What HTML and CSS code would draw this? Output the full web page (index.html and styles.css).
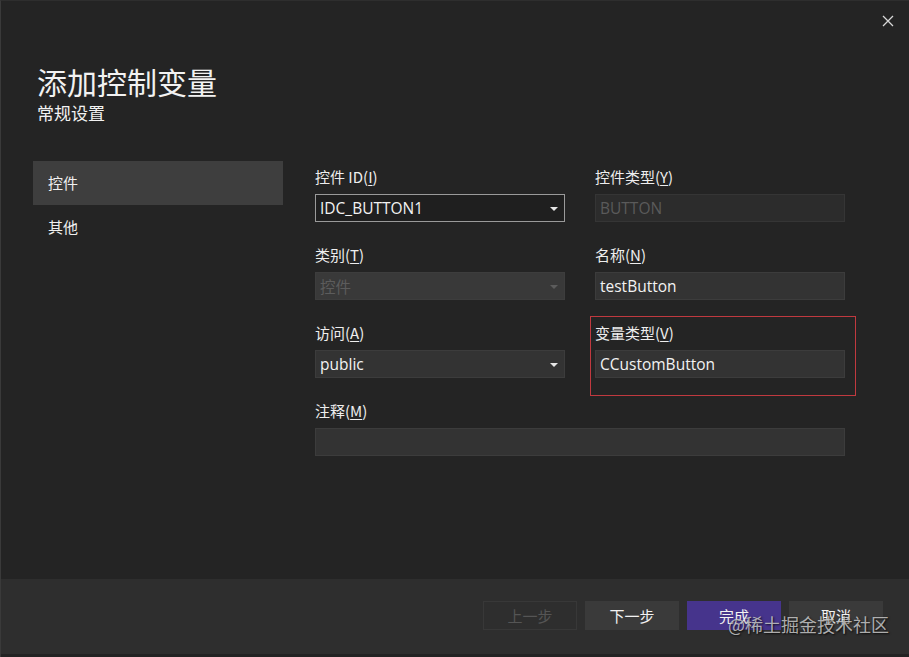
FILE: index.html
```html
<!DOCTYPE html>
<html lang="zh-CN">
<head>
<meta charset="utf-8">
<title>添加控制变量</title>
<link rel="stylesheet" href="styles.css">
</head>
<body>
<div class="window">
  <div class="close" aria-label="关闭">
    <svg width="12" height="12" viewBox="0 0 12 12"><path d="M1 1L11 11M11 1L1 11" stroke="#d8d8d8" stroke-width="1.3" fill="none"/></svg>
  </div>
  <div class="header">
    <h1 class="title">添加控制变量</h1>
    <div class="subtitle">常规设置</div>
  </div>
  <div class="main">
    <nav class="nav">
      <div class="nav-item active">控件</div>
      <div class="nav-item">其他</div>
    </nav>
    <div class="form">
      <div class="field">
        <label class="label">控件 ID(<u>I</u>)</label>
        <div class="input combo focus"><span>IDC_BUTTON1</span><i class="arrow"></i></div>
      </div>
      <div class="field">
        <label class="label">控件类型(<u>Y</u>)</label>
        <div class="input readonly"><span>BUTTON</span></div>
      </div>
      <div class="field">
        <label class="label">类别(<u>T</u>)</label>
        <div class="input combo disabled"><span>控件</span><i class="arrow dim"></i></div>
      </div>
      <div class="field">
        <label class="label">名称(<u>N</u>)</label>
        <div class="input"><span>testButton</span></div>
      </div>
      <div class="field">
        <label class="label">访问(<u>A</u>)</label>
        <div class="input combo"><span>public</span><i class="arrow"></i></div>
      </div>
      <div class="field highlight">
        <label class="label">变量类型(<u>V</u>)</label>
        <div class="input"><span>CCustomButton</span></div>
      </div>
      <div class="field wide">
        <label class="label">注释(<u>M</u>)</label>
        <div class="input"><span></span></div>
      </div>
    </div>
  </div>
  <div class="footer">
    <button class="btn disabled">上一步</button>
    <button class="btn">下一步</button>
    <button class="btn primary">完成</button>
    <button class="btn">取消</button>
    <div class="watermark">@稀土掘金技术社区</div>
  </div>
</div>
</body>
</html>
```
FILE: styles.css
```css
* { box-sizing: border-box; }
html, body {
  margin: 0;
  padding: 0;
  background: #252526;
}
body {
  width: 909px;
  height: 657px;
  overflow: hidden;
  font-family: "Noto Sans", "Noto Sans CJK SC", sans-serif;
  color: #f0f0f0;
}
.window {
  position: relative;
  width: 909px;
  height: 657px;
  background: #242424;
  border-left: 1px solid #3a3a3a;
  border-top: 1px solid #2e2e2e;
  display: flex;
  flex-direction: column;
}
.close {
  position: absolute;
  top: 14px;
  right: 15px;
  width: 12px;
  height: 12px;
  line-height: 0;
}
.header {
  padding: 62px 0 0 36px;
  height: 160px;
}
.title {
  margin: 0;
  font-family: "Noto Sans CJK SC", sans-serif;
  font-weight: 400;
  font-size: 30px;
  line-height: 36px;
  color: #f2f2f2;
}
.subtitle {
  font-family: "Noto Sans CJK SC", sans-serif;
  font-size: 17px;
  line-height: 22px;
  margin-top: 3px;
  color: #f2f2f2;
}
.main {
  flex: 1;
  display: flex;
  padding-left: 32px;
}
.nav {
  width: 250px;
  display: flex;
  flex-direction: column;
}
.nav-item {
  height: 44px;
  line-height: 44px;
  padding-left: 15px;
  font-family: "Noto Sans CJK SC", sans-serif;
  font-size: 15px;
  color: #f0f0f0;
}
.nav-item.active {
  background: #3e3e3e;
}
.form {
  margin-left: 32px;
  padding-top: 6px;
  display: grid;
  grid-template-columns: 250px 250px;
  column-gap: 30px;
  row-gap: 23px;
  align-content: start;
}
.field {
  display: flex;
  flex-direction: column;
  gap: 7px;
}
.field.wide {
  grid-column: 1 / span 2;
}
.field.highlight {
  outline: 1px solid #c0393f;
  margin: -6px -10px -17px -4px;
  padding: 6px 10px 17px 4px;
}
.label {
  font-family: "Noto Sans CJK SC", sans-serif;
  font-size: 15px;
  line-height: 20px;
  color: #eeeeee;
}
.label u {
  text-decoration-thickness: 1px;
  text-underline-offset: 2px;
}
.input {
  position: relative;
  height: 28px;
  background: #333333;
  border: 1px solid #3c3c3c;
  padding: 0 4px;
  display: flex;
  align-items: center;
  font-family: "Open Sans", "Noto Sans CJK SC", sans-serif;
  font-size: 15.5px;
  color: #f2f2f2;
}
.input.focus {
  background: #1f1f1f;
  border-color: #9a9a9a;
}
.input.readonly {
  background: #2c2c2c;
  border-color: #353535;
  color: #5a5a5a;
}
.input.disabled {
  background: #393939;
  border-color: #3d3d3d;
  color: #5c5c5c;
  font-family: "Noto Sans CJK SC", sans-serif;
}
.arrow {
  position: absolute;
  right: 6px;
  top: 12px;
  width: 0;
  height: 0;
  border-left: 4px solid transparent;
  border-right: 4px solid transparent;
  border-top: 4px solid #e6e6e6;
}
.arrow.dim {
  border-top-color: #5c5c5c;
}
.footer {
  position: relative;
  height: 78px;
  background: #2e2e2e;
  border-bottom: 3px solid #232323;
  display: flex;
  justify-content: flex-end;
  align-items: flex-start;
  gap: 8px;
  padding: 22px 26px 0 0;
}
.btn {
  width: 94px;
  height: 29px;
  border: 1px solid #3a3a3a;
  background: #3a3a3a;
  color: #f2f2f2;
  font-family: "Noto Sans CJK SC", sans-serif;
  font-size: 15px;
  padding: 0;
  margin: 0;
}
.btn.disabled {
  background: #2e2e2e;
  border-color: #383838;
  color: #555555;
}
.btn.primary {
  background: #46348c;
  border-color: #46348c;
}
.watermark {
  position: absolute;
  right: 20px;
  top: 33px;
  font-family: "Noto Sans CJK SC", sans-serif;
  font-size: 18px;
  line-height: 24px;
  color: rgba(200, 200, 200, 0.85);
  text-shadow: 1px 1px 2px rgba(0, 0, 0, 0.8);
  pointer-events: none;
}
```
